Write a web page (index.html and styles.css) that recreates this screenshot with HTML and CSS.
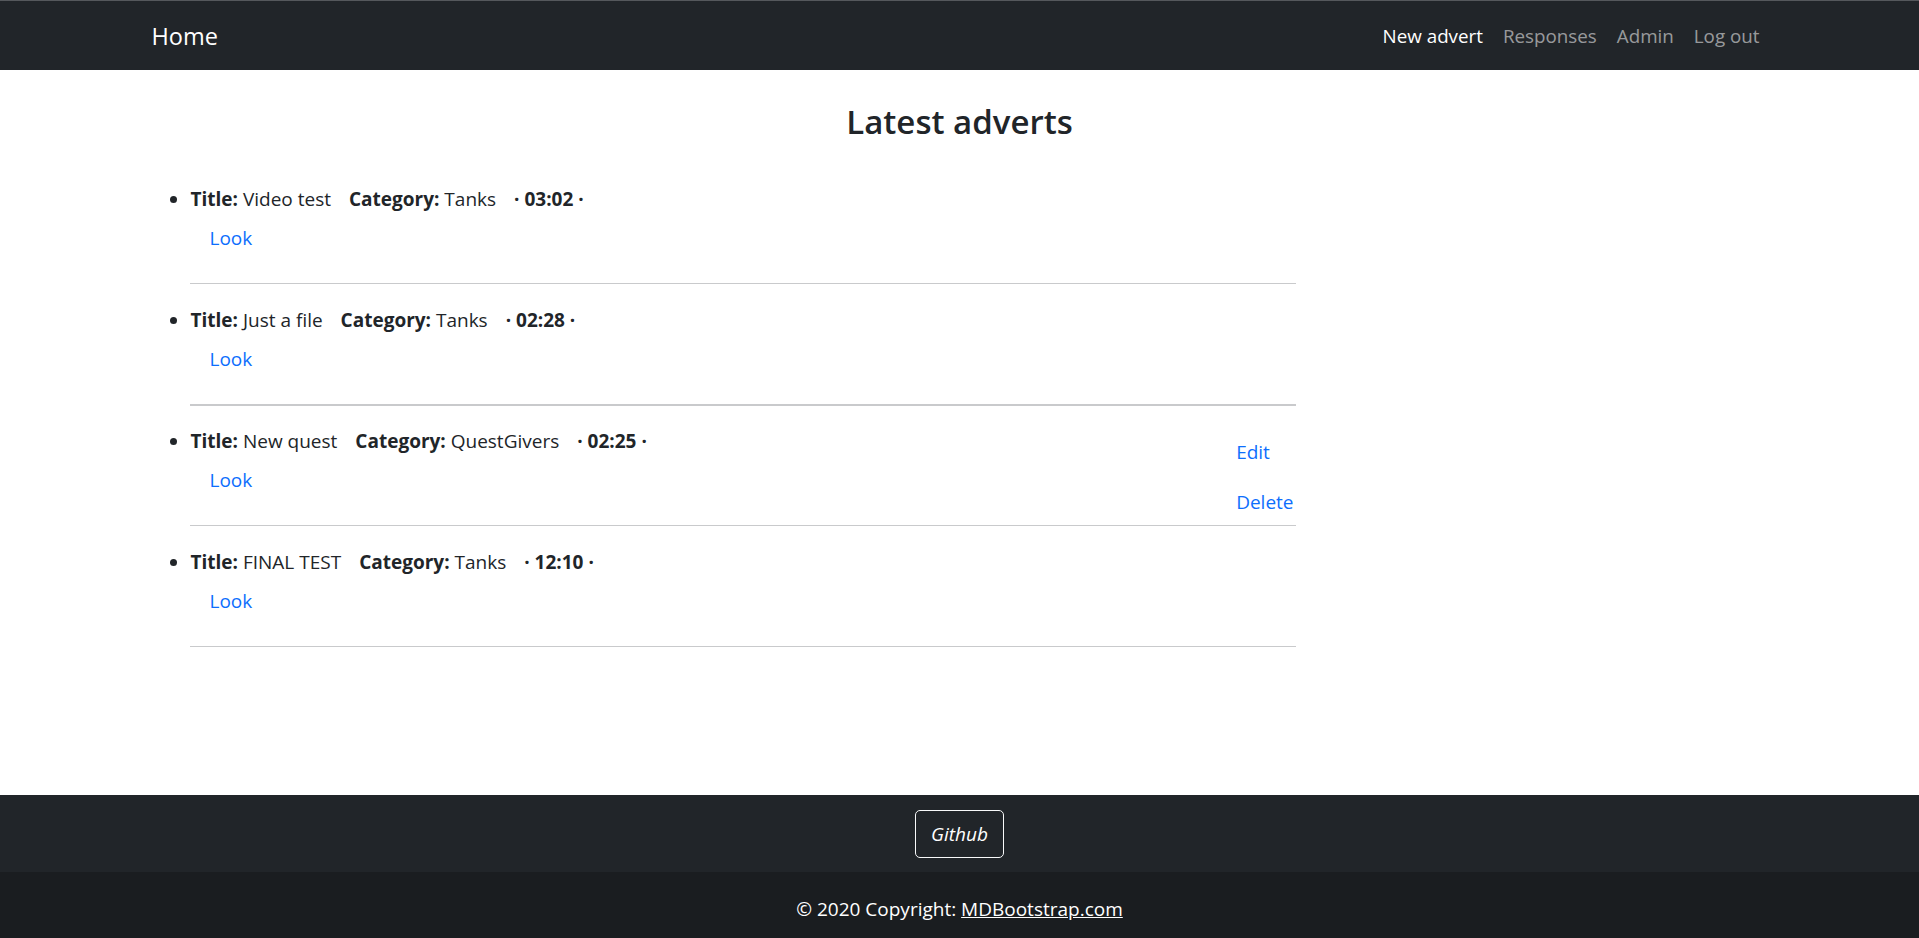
FILE: index.html
```html
<!DOCTYPE html>
<html lang="en">
<head>
<meta charset="utf-8">
<title>Latest adverts</title>
<link rel="stylesheet" href="styles.css">
</head>
<body>
<header class="navbar">
  <div class="container nav-inner">
    <a class="brand" href="#">Home</a>
    <nav class="nav-links">
      <a class="nav-link active" href="#">New advert</a>
      <a class="nav-link" href="#">Responses</a>
      <a class="nav-link" href="#">Admin</a>
      <a class="nav-link" href="#">Log out</a>
    </nav>
  </div>
</header>

<main class="main">
  <div class="container">
    <h2 class="page-title">Latest adverts</h2>
    <ul class="adverts">
      <li class="advert">
        <div class="advert-row">
          <div class="advert-body">
            <div class="advert-meta"><span class="field"><strong>Title:</strong> Video test</span><span class="field"><strong>Category:</strong> Tanks</span><strong class="field">· 03:02 ·</strong></div>
            <div class="advert-look"><a href="#">Look</a></div>
          </div>
        </div>
        <hr class="sep">
      </li>
      <li class="advert">
        <div class="advert-row">
          <div class="advert-body">
            <div class="advert-meta"><span class="field"><strong>Title:</strong> Just a file</span><span class="field"><strong>Category:</strong> Tanks</span><strong class="field">· 02:28 ·</strong></div>
            <div class="advert-look"><a href="#">Look</a></div>
          </div>
        </div>
        <hr class="sep sep-thick">
      </li>
      <li class="advert">
        <div class="advert-row">
          <div class="advert-body">
            <div class="advert-meta"><span class="field"><strong>Title:</strong> New quest</span><span class="field"><strong>Category:</strong> QuestGivers</span><strong class="field">· 02:25 ·</strong></div>
            <div class="advert-look"><a href="#">Look</a></div>
          </div>
          <div class="advert-actions">
            <a href="#">Edit</a>
            <a href="#">Delete</a>
          </div>
        </div>
        <hr class="sep">
      </li>
      <li class="advert">
        <div class="advert-row">
          <div class="advert-body">
            <div class="advert-meta"><span class="field"><strong>Title:</strong> FINAL TEST</span><span class="field"><strong>Category:</strong> Tanks</span><strong class="field">· 12:10 ·</strong></div>
            <div class="advert-look"><a href="#">Look</a></div>
          </div>
        </div>
        <hr class="sep">
      </li>
    </ul>
  </div>
</main>

<footer class="footer">
  <div class="footer-top">
    <a class="btn-outline" href="#"><em>Github</em></a>
  </div>
  <div class="footer-bottom">
    © 2020 Copyright: <a href="#">MDBootstrap.com</a>
  </div>
</footer>
</body>
</html>
```
FILE: styles.css
```css
* { box-sizing: border-box; }

html, body { height: 100%; }

body {
  margin: 0;
  min-height: 100vh;
  display: flex;
  flex-direction: column;
  font-family: "Open Sans", "Noto Sans", sans-serif;
  font-size: 19px;
  line-height: 30px;
  color: #212529;
  background: #fff;
}

a { color: #0d6efd; text-decoration: none; }

.container {
  width: 100%;
  max-width: 1650px;
  margin: 0 auto;
  padding: 0 15px;
}

/* navbar */
.navbar {
  background: #212529;
  border-top: 1px solid #55585c;
  height: 70px;
}
.nav-inner {
  height: 100%;
  display: flex;
  align-items: center;
  justify-content: space-between;
}
.brand {
  color: #fff;
  font-size: 23.5px;
  line-height: 37px;
  padding-left: 2px;
  margin-top: 1px;
}
.nav-links {
  display: flex;
  margin-top: 1px;
}
.nav-link {
  color: rgba(255, 255, 255, 0.55);
  padding: 0 10px;
  font-size: 18.8px;
}
.nav-link.active { color: #fff; }

/* main */
.main { flex: 1; }

.page-title {
  margin: 28px 0 38px;
  text-align: center;
  font-size: 33px;
  line-height: 48px;
  font-weight: 600;
}

.adverts {
  margin: 0;
  padding-left: 40px;
  width: 1146px;
}

.advert-row {
  display: flex;
  justify-content: space-between;
  align-items: flex-start;
}
.advert-meta { padding-left: 1px; }
.field { margin-right: 18px; }
.field:last-child { margin-right: 0; }

.advert-look {
  padding: 9px 0 9px 20px;
}

.advert-actions {
  display: flex;
  flex-direction: column;
  gap: 20px;
  padding: 11px 2px 0 0;
  margin-bottom: -13px;
}

.sep {
  margin: 21px 0;
  border: 0;
  border-top: 1px solid #c9cacc;
  height: 0;
}
.sep-thick { border-top-width: 2px; margin-bottom: 20px; }

/* footer */
.footer { color: #fff; }
.footer-top {
  background: #212529;
  display: flex;
  justify-content: center;
  padding: 15px 0 14px;
}
.btn-outline {
  display: inline-block;
  color: #fff;
  border: 1px solid #f8f9fa;
  border-radius: 5px;
  padding: 8px 15px;
  line-height: 30px;
}
.footer-bottom {
  background: #1a1d20;
  text-align: center;
  padding: 22px 0 14px;
}
.footer-bottom a {
  color: #fff;
  text-decoration: underline;
}
```
